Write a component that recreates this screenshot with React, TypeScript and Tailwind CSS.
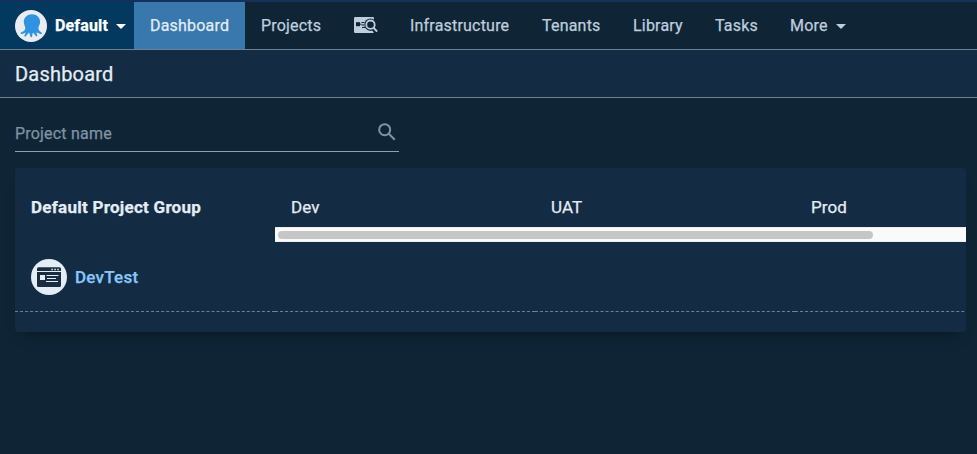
import type { ReactNode } from "react";

function Caret({ className = "" }: { className?: string }) {
  return (
    <svg className={className} width="10" height="5" viewBox="0 0 10 5" fill="currentColor">
      <path d="M0 0h10L5 5z" />
    </svg>
  );
}

function OctopusLogo() {
  return (
    <svg width="32" height="32" viewBox="0 0 32 32" className="shrink-0">
      <circle cx="16" cy="16" r="16" fill="#e9edf3" />
      <path
        fill="#2f93e0"
        d="M17 4.300c-4.800 0-8.200 3.300-8.200 7.700 0 2.800 1.500 4.200 1.500 6.300 0 2.400-2.300 3.300-4.300 4.200-.9.500-.5 1.500.5 1.400 1.600 0 2.900-.7 4.100-1.400-.2 1-.8 2-1.200 2.900-.4 1 .5 1.600 1.300.8 1.500-1.300 2.300-2.500 3.400-3.600.6 1.300.8 2.500 1.300 3.900.4 1.200 1.600 1 1.800-.1.200-1.300.1-2.600.8-3.800 1 1 1.700 2.200 2.900 3.400.8.800 1.700.3 1.400-.8-.2-1-.8-1.900-1-2.900 1.500.7 2.700 1.500 4.600 1.800 1.100.1 1.400-.8.700-1.400-1.500-1.200-3.200-2.100-3.200-4.400 0-2.100 1.700-3.700 1.700-6.300C25.100 7.600 21.800 4.300 17 4.300z"
      />
    </svg>
  );
}

function InsightIcon() {
  return (
    <svg width="24" height="17" viewBox="0 0 24 17" className="block">
      <rect x="0" y="0" width="20" height="16" rx="1.200" fill="#bfcede" />
      <rect x="2" y="5.200" width="4" height="4" fill="#0f2535" />
      <path d="M6 7.200h1.500M7.500 5.500h3M7.500 8h2.500M8 10.500h3" stroke="#0f2535" strokeWidth="1" />
      <circle cx="16.500" cy="7.700" r="6.200" fill="#0f2535" />
      <path d="M19 11.500l3 3.500" stroke="#0f2535" strokeWidth="4" />
      <circle cx="16.500" cy="7.700" r="4.200" fill="#0f2535" stroke="#bfcede" strokeWidth="1.800" />
      <path d="M19.500 10.700l3.600 4" stroke="#bfcede" strokeWidth="2" />
    </svg>
  );
}

function ProjectIcon() {
  return (
    <svg width="36" height="36" viewBox="0 0 36 36" className="shrink-0">
      <circle cx="18" cy="18" r="18" fill="#e3edf6" />
      <path fill="#1a2c40" d="M7.500 8.300h21q1.500 0 1.500 1.500V12H6V9.800Q6 8.300 7.500 8.300zM6 13h24v13.500q0 1.500-1.500 1.500h-21Q6 28 6 26.500z" />
      <path d="M20.300 10.500h1.500M23.300 10.500h1.500M26.300 10.500h1.500" stroke="#e3edf6" strokeWidth="1.300" />
      <rect x="9" y="16" width="5" height="5" fill="#e3edf6" />
      <path d="M15.500 16.500h12M16 19.500h9M15 22.500h12" stroke="#e3edf6" strokeWidth="1" />
    </svg>
  );
}

function NavItem({ children, className = "" }: { children: ReactNode; className?: string }) {
  return <a className={`flex items-center px-4 whitespace-nowrap ${className}`}>{children}</a>;
}

export default function App() {
  return (
    <div className="h-[454px] w-full overflow-hidden bg-[#0f2535] font-['Roboto',sans-serif] text-base tracking-[0.2px] text-[#e3edf6] [-webkit-text-stroke:0.25px]">
      <nav className="flex h-[50px] border-t-2 border-b border-t-[#15305b] border-b-[#6c8290] text-[#bfcede]">
        <div className="flex w-[134px] shrink-0 items-center bg-[#03395f] pl-[15px] font-bold tracking-[0.15px] text-white">
          <OctopusLogo />
          <span className="ml-2">Default</span>
          <Caret className="ml-2 mt-[2px]" />
        </div>
        <NavItem className="w-[111px] bg-[#3878ad] text-[#e3edf6]">Dashboard</NavItem>
        <NavItem className="w-[93px]">Projects</NavItem>
        <NavItem className="w-[56px]"><InsightIcon /></NavItem>
        <NavItem className="w-[132px]">Infrastructure</NavItem>
        <NavItem className="w-[91px]">Tenants</NavItem>
        <NavItem className="w-[82px]">Library</NavItem>
        <NavItem className="w-[75px]">Tasks</NavItem>
        <NavItem>More<Caret className="ml-2 mt-[2px]" /></NavItem>
      </nav>
      <header className="flex h-12 items-center border-b border-[#6c8290] bg-[#142c43] px-[15px]">
        <h1 className="text-xl">Dashboard</h1>
      </header>
      <main className="pr-[11px] pl-[15px] pt-[18px]">
        <div className="flex h-9 w-96 items-center justify-between border-b border-[#8ba0b0] pr-[3px] text-[#8093a4]">
          <span>Project name</span>
          <svg width="18" height="18" viewBox="0 0 18 18" fill="none" stroke="currentColor" strokeWidth="2" className="mb-1">
            <circle cx="6.700" cy="6.700" r="5.500" />
            <path d="M10.800 10.800l6 6" />
          </svg>
        </div>
        <section className="mt-4 h-[164px] rounded bg-[#142c43] text-[17px] leading-6 tracking-[0.1px] shadow-[0_10px_14px_-8px_rgba(0,0,0,0.4)]">
          <div className="flex h-[74px]">
            <div className="w-[260px] shrink-0 pt-[27px] pl-4 font-bold tracking-[0.26px]">Default Project Group</div>
            <div className="flex min-w-0 grow flex-col">
              <div className="flex h-[59px] overflow-hidden pt-[27px]">
                <div className="w-[260px] shrink-0 pl-4">Dev</div>
                <div className="w-[260px] shrink-0 pl-4">UAT</div>
                <div className="w-[260px] shrink-0 pl-4">Prod</div>
              </div>
              <div className="flex h-[15px] items-center border-y border-[#ededed] bg-[#fafafa] pl-[3px]">
                <div className="h-2 w-[595px] rounded-full bg-[#c6c6c6]" />
              </div>
            </div>
          </div>
          <div className="flex h-[70px] overflow-hidden">
            <div className="flex w-[260px] shrink-0 items-center border-b border-dashed border-[#6c8290] pl-4 font-medium tracking-[0.25px] text-[#87c7fb]">
              <ProjectIcon />
              <span className="ml-2">DevTest</span>
            </div>
            <div className="w-[260px] shrink-0 border-b border-dashed border-[#6c8290]" />
            <div className="w-[260px] shrink-0 border-b border-dashed border-[#6c8290]" />
            <div className="w-[260px] shrink-0 border-b border-dashed border-[#6c8290]" />
          </div>
        </section>
      </main>
    </div>
  );
}
